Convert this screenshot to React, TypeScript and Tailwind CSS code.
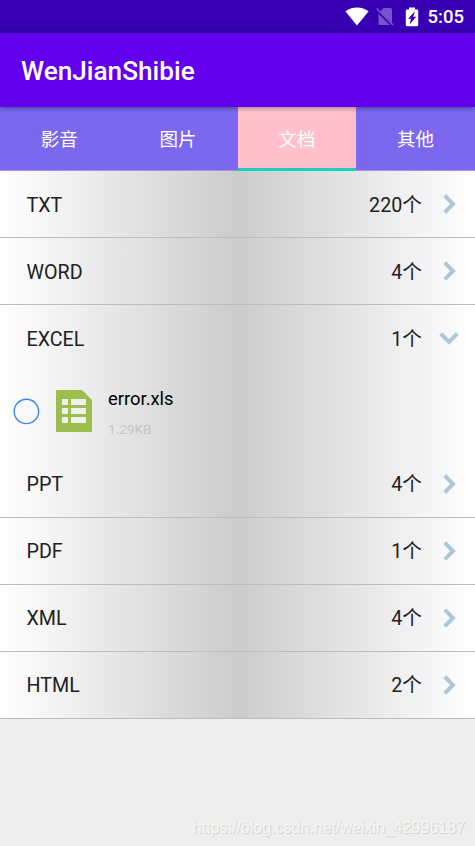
import clsx from 'clsx';

interface Category {
  name: string;
  count: number;
  files?: { name: string; size: string }[];
}

const tabs = ['影音', '图片', '文档', '其他'];
const activeTab = '文档';

const categories: Category[] = [
  { name: 'TXT', count: 220 },
  { name: 'WORD', count: 4 },
  { name: 'EXCEL', count: 1, files: [{ name: 'error.xls', size: '1.29KB' }] },
  { name: 'PPT', count: 4 },
  { name: 'PDF', count: 1 },
  { name: 'XML', count: 4 },
  { name: 'HTML', count: 2 },
];

function StatusBar() {
  return (
    <div className="flex h-[33px] items-center justify-end bg-[#3700b3] pr-[11px] text-white">
      <svg width="24" height="19" viewBox="0 0 24 19" className="mr-[7px]" fill="currentColor" aria-hidden>
        <path d="M12 18.5 0.4 4.2C3.6 1.8 7.6 0.4 12 0.4s8.400 1.400 11.600 3.800z" />
      </svg>
      <svg width="18" height="20" viewBox="0 0 18 20" className="mr-[11px]" aria-hidden>
        <path d="M7.500 1H14.500a1.500 1.500 0 0 1 1.500 1.500V18H4a1.500 1.500 0 0 1-1.500-1.500V6z" fill="#7954cc" />
        <path d="M0.200 2.300 17 19.100" stroke="#3700b3" strokeWidth="3" />
        <path d="M0.600 1.500 17 18" stroke="#7954cc" strokeWidth="1.600" />
      </svg>
      <svg width="14" height="20" viewBox="0 0 14 20" className="mr-[9px]" aria-hidden>
        <path
          d="M4 0.500h6v2h2a1.200 1.200 0 0 1 1.200 1.200V18a1.200 1.200 0 0 1-1.200 1.200H2A1.200 1.200 0 0 1 0.800 18V3.700A1.200 1.200 0 0 1 2 2.500h2z"
          fill="currentColor"
        />
        <path d="M10 4.300 3 11.800h3L4.500 17.500l6.800-7.800H8.200z" fill="#3700b3" />
      </svg>
      <span className="pt-[2px] text-[18.5px] leading-[33px] font-medium">5:05</span>
    </div>
  );
}

function TabBar() {
  return (
    <div className="flex h-[64px] border-b border-[#a394e0] bg-[#7b68ee] text-[18.5px] text-white">
      {tabs.map((tab) => (
        <button
          key={tab}
          type="button"
          className={clsx(
            'flex flex-1 items-center justify-center border-b-[3px] pt-[7px]',
            tab === activeTab ? '-mb-px border-[#18cfc0] bg-[#ffc0cb] pb-px' : 'border-transparent',
          )}
        >
          {tab}
        </button>
      ))}
    </div>
  );
}

function Chevron({ open }: { open: boolean }) {
  return (
    <svg width="20" height="20" viewBox="0 0 20 20" className={open ? 'rotate-90' : ''} fill="none" aria-hidden>
      <path d="M5.700 1.700 14 10 5.700 18.300" stroke="#b0c6d4" strokeWidth="4" />
    </svg>
  );
}

function SheetIcon() {
  return (
    <svg width="36" height="42" viewBox="0 0 36 42" className="mb-px ml-[16px]" aria-hidden>
      <path d="M1 0H26L36 10V41a1 1 0 0 1-1 1H1a1 1 0 0 1-1-1V1a1 1 0 0 1 1-1z" fill="#9cbe4f" />
      <path d="M6 9h6v6H6zM15 9h15v6H15zM6 18h6v6H6zM15 18h15v6H15zM6 27h6v6H6zM15 27h15v6H15z" fill="#f0f0f0" />
    </svg>
  );
}

function CategoryRow({ name, count, files }: Category) {
  return (
    <li>
      <div
        className={clsx(
          'flex h-[67px] items-center border-b pr-[16px] pl-[26.5px] text-[19.7px] text-[#212121]',
          files ? 'border-transparent' : 'border-[#bdbdbd]',
        )}
      >
        <span className="flex-1 pt-[3px]">{name}</span>
        <span className="mr-[17px] pt-[3px]">{count}个</span>
        <Chevron open={!!files} />
      </div>
      {files?.map((file) => (
        <div key={file.name} className="flex h-[78.4px] items-center pl-[13px]">
          <svg width="27" height="27" viewBox="0 0 27 27" fill="none" aria-hidden>
            <circle cx="13.400" cy="13.400" r="12.200" stroke="#3b86e8" strokeWidth="1.400" />
          </svg>
          <SheetIcon />
          <div className="ml-[16px] flex flex-col pt-[3px]">
            <span className="text-[18.4px] leading-[26px] text-black">{file.name}</span>
            <span className="mt-[7px] text-[13.6px] leading-[20px] text-[#c4c4c4]">{file.size}</span>
          </div>
        </div>
      ))}
    </li>
  );
}

export default function App() {
  return (
    <div className="relative h-[846px] w-[475px] overflow-hidden bg-[#eeeeee] font-[Roboto,'Noto_Sans_CJK_SC',sans-serif]">
      <StatusBar />
      <header className="relative z-10 flex h-[74px] items-center bg-[#6200ee] pt-[3px] pl-[21px] text-[26.2px] font-medium text-white shadow-[0_1px_5px_rgba(0,0,0,0.4)]">
        WenJianShibie
      </header>
      <TabBar />
      <ul className="bg-[linear-gradient(to_right,#ffffff,#cccccc_50%,#ffffff)] pt-[0.3px]">
        {categories.map((category) => (
          <CategoryRow key={category.name} {...category} />
        ))}
      </ul>
      <span className="absolute right-[10px] bottom-[6px] font-['Liberation_Sans',sans-serif] text-[16px] text-[#f6f6f6] [text-shadow:1px_1px_1px_#cccccc]">
        https://blog.csdn.net/weixin_42996187
      </span>
    </div>
  );
}
